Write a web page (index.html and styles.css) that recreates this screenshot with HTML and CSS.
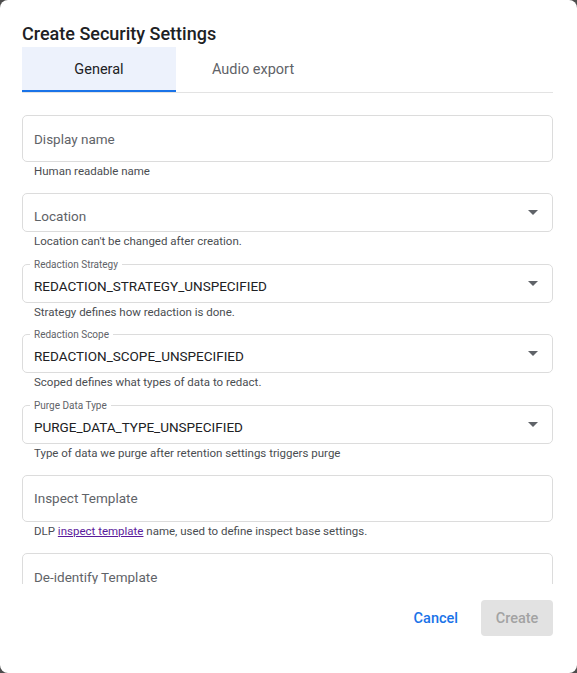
FILE: index.html
```html
<!DOCTYPE html>
<html lang="en">
<head>
<meta charset="utf-8">
<title>Create Security Settings</title>
<link rel="stylesheet" href="styles.css">
</head>
<body>
<div class="dialog">
  <h2 class="title">Create Security Settings</h2>
  <div class="tabs">
    <div class="tab active">General</div>
    <div class="tab">Audio export</div>
  </div>
  <div class="content">
    <div class="field">
      <div class="box box-input"><span class="placeholder">Display name</span></div>
      <div class="hint">Human readable name</div>
    </div>
    <div class="field">
      <div class="box box-select"><span class="placeholder placeholder-select">Location</span><span class="arrow"></span></div>
      <div class="hint">Location can't be changed after creation.</div>
    </div>
    <div class="field">
      <div class="box box-select">
        <span class="float-label">Redaction Strategy</span>
        <span class="value">REDACTION_STRATEGY_UNSPECIFIED</span><span class="arrow"></span>
      </div>
      <div class="hint">Strategy defines how redaction is done.</div>
    </div>
    <div class="field">
      <div class="box box-select">
        <span class="float-label">Redaction Scope</span>
        <span class="value">REDACTION_SCOPE_UNSPECIFIED</span><span class="arrow"></span>
      </div>
      <div class="hint">Scoped defines what types of data to redact.</div>
    </div>
    <div class="field">
      <div class="box box-select">
        <span class="float-label">Purge Data Type</span>
        <span class="value">PURGE_DATA_TYPE_UNSPECIFIED</span><span class="arrow"></span>
      </div>
      <div class="hint">Type of data we purge after retention settings triggers purge</div>
    </div>
    <div class="field">
      <div class="box box-input"><span class="placeholder">Inspect Template</span></div>
      <div class="hint">DLP <a class="link" href="#">inspect template</a> name, used to define inspect base settings.</div>
    </div>
    <div class="field">
      <div class="box box-input"><span class="placeholder">De-identify Template</span></div>
    </div>
  </div>
  <div class="actions">
    <button class="btn btn-text" type="button">Cancel</button>
    <button class="btn btn-filled" type="button" disabled>Create</button>
  </div>
</div>
</body>
</html>
```
FILE: styles.css
```css
* { box-sizing: border-box; }
html, body { margin: 0; padding: 0; }
body {
  background: #4d4d4d;
  font-family: Roboto, "Liberation Sans", Arial, sans-serif;
  color: #202124;
}
.dialog {
  width: 577px;
  height: 673px;
  background: #ffffff;
  border-radius: 8px;
  padding: 22px 24px 0 22px;
  display: flex;
  flex-direction: column;
}
.title {
  margin: 0 0 1px 0;
  font-size: 18px;
  line-height: 24px;
  font-weight: 500;
  color: #202124;
}
.tabs {
  display: flex;
  border-bottom: 1px solid #e3e3e3;
}
.tab {
  width: 154px;
  height: 45px;
  display: flex;
  align-items: center;
  justify-content: center;
  font-size: 14.5px;
  font-weight: 400;
  color: #5f6368;
}
.tab.active {
  background: #edf2fc;
  color: #202124;
  box-shadow: inset 0 -2px 0 #1a73e8;
}
.content {
  height: 491px;
  overflow: hidden;
  padding-top: 22px;
  display: flex;
  flex-direction: column;
  gap: 14.4px;
}
.field { display: flex; flex-direction: column; flex-shrink: 0; }
.box {
  position: relative;
  border: 1px solid #dcdcdc;
  border-radius: 5px;
  display: flex;
  align-items: center;
  padding: 0 14px 0 11px;
  font-size: 13.5px;
}
.box-input { height: 47px; }
.box-select { height: 39px; }
.placeholder { color: #5f6368; line-height: 20px; }
.placeholder-select { padding-top: 7px; }
.value { flex: 1; color: #202124; padding-top: 5px; line-height: 20px; }
.arrow {
  margin-left: auto;
  width: 0;
  height: 0;
  border-left: 5px solid transparent;
  border-right: 5px solid transparent;
  border-top: 5px solid #5f6368;
}
.float-label {
  position: absolute;
  left: 7px;
  top: -7px;
  padding: 0 4px;
  background: #ffffff;
  font-size: 10px;
  line-height: 13px;
  color: #5f6368;
}
.hint {
  padding: 1px 12px 0 12px;
  font-size: 11.5px;
  line-height: 16px;
  color: #4a4d51;
}
.link { color: #5b1a9c; text-decoration: underline; }
.actions {
  display: flex;
  justify-content: flex-end;
  align-items: flex-start;
  gap: 13px;
  padding-top: 16px;
}
.btn {
  font-family: Roboto, "Liberation Sans", Arial, sans-serif;
  height: 36px;
  border: none;
  border-radius: 4px;
  font-size: 14.5px;
  font-weight: 500;
  padding: 0 10px;
  min-width: 64px;
}
.btn-text { background: transparent; color: #1a73e8; }
.btn-filled { background: #e2e2e2; color: #a3a3a3; width: 72px; }
```
